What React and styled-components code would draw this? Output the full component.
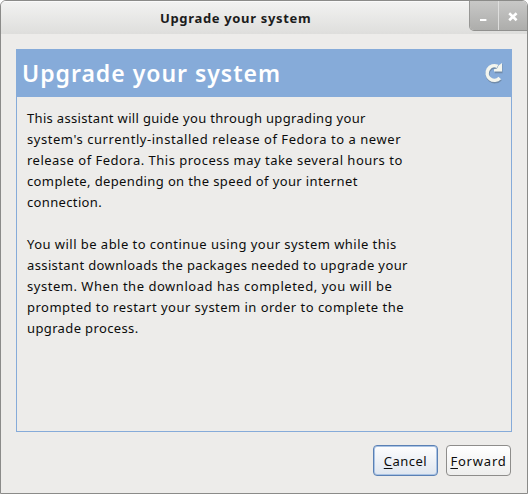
import React from 'react';
import styled, { createGlobalStyle } from 'styled-components';

const intro = [
    { text: 'This assistant will guide you through upgrading your', spacing: 0.33 },
    { text: "system's currently-installed release of Fedora to a newer", spacing: 0.55 },
    { text: 'release of Fedora. This process may take several hours to', spacing: 0.49 },
    { text: 'complete, depending on the speed of your internet', spacing: 0.38 },
    { text: 'connection.', spacing: 0.35 },
];

const details = [
    { text: 'You will be able to continue using your system while this', spacing: 0.46 },
    { text: 'assistant downloads the packages needed to upgrade your', spacing: 0.38 },
    { text: 'system. When the download has completed, you will be', spacing: 0.53 },
    { text: 'prompted to restart your system in order to complete the', spacing: 0.47 },
    { text: 'upgrade process.', spacing: 0.37 },
];

const RefreshIcon = () => (
    <svg width="22" height="24" viewBox="0 0 22 24" fill="none">
        <g stroke="#5f7183" strokeOpacity="0.55" transform="translate(0.4 1)">
            <path d="M17.8 17A7.3 7.3 0 1 1 15.6 5.4" strokeWidth="4.2" />
            <path d="M19 2v8.2h-6.6" strokeWidth="2.2" />
        </g>
        <path d="M17.8 17A7.3 7.3 0 1 1 15.6 5.4" stroke="#f3f5ee" strokeWidth="3.6" />
        <path d="M20 2v8.6h-8v-2.4l3-0.6 1.6-3z" fill="#f3f5ee" />
    </svg>
);

const Paragraph = ({ lines }) => (
    <StyledParagraph>
        {lines.map(({ text, spacing }) => (
            <Line key={text} $spacing={spacing}>{text}</Line>
        ))}
    </StyledParagraph>
);

const App = () => {
    return (
        <>
            <GlobalStyle />
            <Window>
                <TitleBar>
                    <Title>Upgrade your system</Title>
                    <WindowControls>
                        <ControlButton aria-label="Minimize" $width={28}>
                            <svg width="28" height="28" viewBox="0 0 28 28">
                                <path d="M10 18h6.4" stroke="#fff" strokeWidth="2.2" />
                            </svg>
                        </ControlButton>
                        <ControlButton aria-label="Close" $width={29}>
                            <svg width="28" height="28" viewBox="0 0 28 28">
                                <path d="M10.2 11.3l7.4 7M17.6 11.3l-7.4 7" stroke="#fff" strokeWidth="2.6" />
                            </svg>
                        </ControlButton>
                    </WindowControls>
                </TitleBar>
                <Panel>
                    <PanelHeader>
                        <Heading>Upgrade your system</Heading>
                        <RefreshIcon />
                    </PanelHeader>
                    <PanelBody>
                        <Paragraph lines={intro} />
                        <Paragraph lines={details} />
                    </PanelBody>
                </Panel>
                <Actions>
                    <Button $focused $spacing={0.5}><u>C</u>ancel</Button>
                    <Button $spacing={0.8}><u>F</u>orward</Button>
                </Actions>
            </Window>
        </>
    );
};

export default App;

const GlobalStyle = createGlobalStyle`
    * {
        box-sizing: border-box;
    }

    body {
        margin: 0;
        background: #fff;
        font-family: "Noto Sans", "Open Sans", sans-serif;
    }
`;

const Window = styled.div`
    display: flex;
    flex-direction: column;
    width: 528px;
    height: 494px;
    overflow: hidden;
    border: 1px solid #8b8b89;
    border-radius: 6px 6px 0 0;
    background: #edecea;
`;

const TitleBar = styled.header`
    display: grid;
    grid-template-columns: 468px 58px;
    flex: none;
    height: 33px;
    border-top: 1px solid #fafafa;
    background: linear-gradient(#f2f2f1, #dededc);
`;

const Title = styled.h1`
    margin: 0;
    padding-left: 159px;
    color: #1c1c1c;
    font-size: 13px;
    font-weight: 700;
    line-height: 32px;
    letter-spacing: 0.66px;
    white-space: nowrap;
`;

const WindowControls = styled.div`
    display: flex;
    height: 30px;
    margin-top: -1px;
    overflow: hidden;
    border-bottom: 1px solid #91918f;
    border-left: 1px solid #979795;
    border-radius: 0 0 0 5px;
`;

const ControlButton = styled.button`
    width: ${({ $width }) => $width}px;
    height: 29px;
    padding: 0;
    border: 0;
    background: linear-gradient(#c8c8c7, #adadab);

    & + & {
        border-left: 1px solid #dededd;
    }

    svg {
        display: block;
    }
`;

const Panel = styled.section`
    flex: none;
    height: 383px;
    margin: 15px 15px 0;
    border: 1px solid #86abd9;
`;

const PanelHeader = styled.header`
    display: flex;
    align-items: center;
    justify-content: space-between;
    height: 47px;
    padding: 0 7px 1px 5px;
    background: #86abd9;
`;

const Heading = styled.h2`
    margin: 1px 0 0;
    color: #fff;
    font-size: 23px;
    font-weight: 600;
    line-height: 47px;
    letter-spacing: 0.98px;
    white-space: nowrap;
`;

const PanelBody = styled.div`
    padding: 11px 10px;
`;

const StyledParagraph = styled.p`
    margin: 0 0 21px;
    color: #0c0c0c;
    font-size: 13px;
    line-height: 21px;
`;

const Line = styled.span`
    display: block;
    letter-spacing: ${({ $spacing }) => $spacing}px;
    white-space: nowrap;
`;

const Actions = styled.footer`
    display: flex;
    justify-content: flex-end;
    gap: 8px;
    padding: 13px 16px 0;
`;

const Button = styled.button`
    width: 65px;
    height: 31px;
    padding: 0;
    border: 1px solid ${({ $focused }) => ($focused ? '#5a80b4' : '#8e8d8b')};
    border-radius: 4px;
    background: ${({ $focused }) => ($focused ? 'linear-gradient(#fdfdfe, #dfe6ef)' : 'linear-gradient(#fff, #eeeeed)')};
    box-shadow: ${({ $focused }) => ($focused ? 'inset 0 0 0 1px #a9c3e4' : 'none')};
    color: #0c0c0c;
    font-family: inherit;
    font-size: 13px;
    line-height: 30px;
    letter-spacing: ${({ $spacing }) => $spacing}px;
    white-space: nowrap;

    u {
        text-underline-offset: 2px;
    }
`;
